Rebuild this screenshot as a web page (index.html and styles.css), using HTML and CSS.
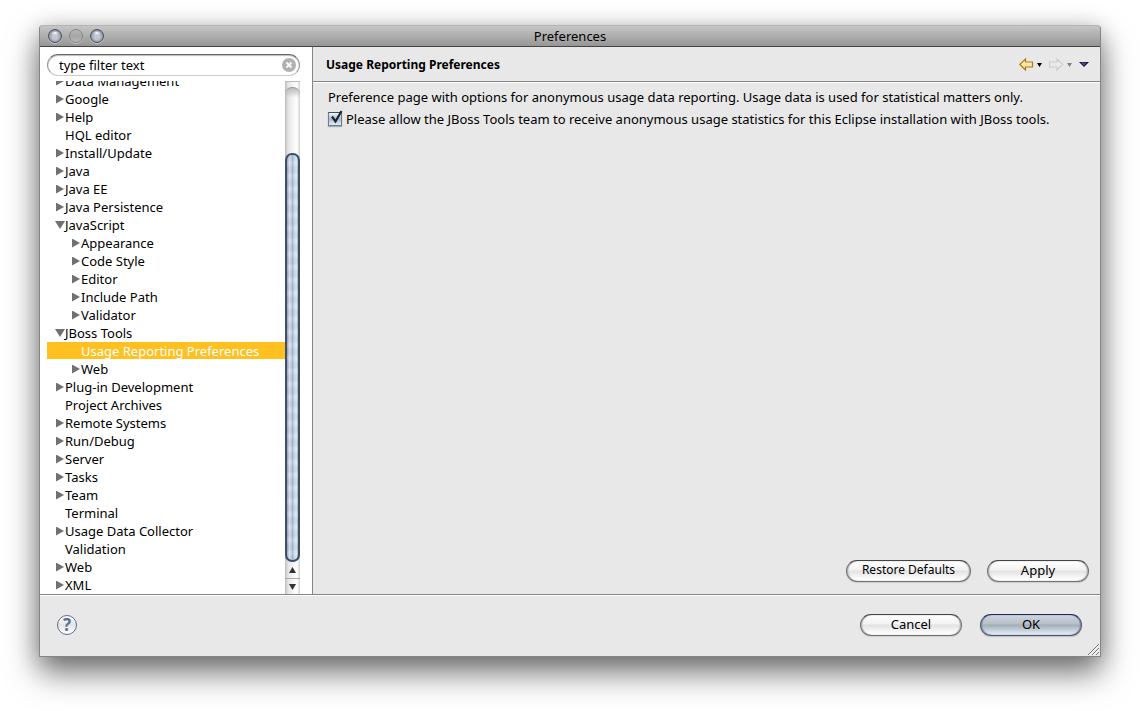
FILE: index.html
```html
<!DOCTYPE html>
<html lang="en">
<head>
<meta charset="utf-8">
<title>Preferences</title>
<link rel="stylesheet" href="styles.css">
</head>
<body>
<main class="window">
  <header class="titlebar">
    <div class="lights">
      <button class="light" type="button" aria-label="Close"></button>
      <button class="light light-off" type="button" aria-label="Minimize" disabled></button>
      <button class="light" type="button" aria-label="Zoom"></button>
    </div>
    <h1 class="window-title">Preferences</h1>
  </header>
  <div class="columns">
    <nav class="sidebar" aria-label="Preference categories">
      <div class="search">
        <input class="search-input" type="text" value="type filter text" aria-label="Filter">
        <button class="clear" type="button" aria-label="Clear filter">
          <svg width="14" height="14" viewBox="0 0 14 14"><circle cx="7" cy="7" r="7" fill="#b0b0b0"/><path d="M4.500 4.500l5 5M9.500 4.500l-5 5" stroke="#fff" stroke-width="1.800"/></svg>
        </button>
      </div>
      <div class="tree-area">
        <div class="tree-view">
          <ul class="tree">
            <li class="row closed">Data Management</li>
            <li class="row closed">Google</li>
            <li class="row closed">Help</li>
            <li class="row">HQL editor</li>
            <li class="row closed">Install/Update</li>
            <li class="row closed">Java</li>
            <li class="row closed">Java EE</li>
            <li class="row closed">Java Persistence</li>
            <li class="row open">JavaScript</li>
            <li class="row child closed">Appearance</li>
            <li class="row child closed">Code Style</li>
            <li class="row child closed">Editor</li>
            <li class="row child closed">Include Path</li>
            <li class="row child closed">Validator</li>
            <li class="row open">JBoss Tools</li>
            <li class="row child selected">Usage Reporting Preferences</li>
            <li class="row child closed">Web</li>
            <li class="row closed">Plug-in Development</li>
            <li class="row">Project Archives</li>
            <li class="row closed">Remote Systems</li>
            <li class="row closed">Run/Debug</li>
            <li class="row closed">Server</li>
            <li class="row closed">Tasks</li>
            <li class="row closed">Team</li>
            <li class="row">Terminal</li>
            <li class="row closed">Usage Data Collector</li>
            <li class="row">Validation</li>
            <li class="row closed">Web</li>
            <li class="row closed">XML</li>
          </ul>
        </div>
        <div class="scrollbar">
          <div class="track"></div>
          <div class="thumb"></div>
          <button class="step" type="button" aria-label="Scroll up"><svg width="7" height="6" viewBox="0 0 7 6"><path d="M3.500 0L7 6H0z" fill="#333"/></svg></button>
          <button class="step step-down" type="button" aria-label="Scroll down"><svg width="7" height="6" viewBox="0 0 7 6"><path d="M0 0h7L3.500 6z" fill="#333"/></svg></button>
        </div>
      </div>
    </nav>
    <section class="page">
      <header class="page-head">
        <h2 class="page-title">Usage Reporting Preferences</h2>
        <div class="history">
          <button class="tool" type="button" aria-label="Back"><svg width="24" height="14" viewBox="0 0 24 14"><defs><linearGradient id="gold" x2="0" y2="1"><stop offset="0" stop-color="#fffbe6"/><stop offset="1" stop-color="#fbd772"/></linearGradient></defs><path d="M.8 6.500L6.500 1v3h7v5h-7v3z" fill="url(#gold)" stroke="#b47a10" stroke-width="1.200"/><path d="M18 5h5l-2.500 4z" fill="#000"/></svg></button>
          <button class="tool" type="button" aria-label="Forward" disabled><svg width="24" height="14" viewBox="0 0 24 14"><path d="M13.700 6.500L8 1v3H.6v5H8v3z" fill="#eaeae7" stroke="#ccc" stroke-width="1.200"/><path d="M18 5h5l-2.500 4z" fill="#808080"/></svg></button>
          <button class="tool" type="button" aria-label="Menu"><svg width="10" height="14" viewBox="0 0 10 14"><path d="M0 4h10L5 9z" fill="#111"/><path d="M1.500 4.500h6L5 8z" fill="#4848a0"/></svg></button>
        </div>
      </header>
      <div class="page-body">
        <p class="description">Preference page with options for anonymous usage data reporting. Usage data is used for statistical matters only.</p>
        <label class="option"><input class="check" type="checkbox" checked><svg class="tick" width="16" height="16" viewBox="0 0 16 16"><path d="M4 6.500L7.500 11.500L13.500 1" fill="none" stroke="#20242c" stroke-width="2.200"/></svg>Please allow the JBoss Tools team to receive anonymous usage statistics for this Eclipse installation with JBoss tools.</label>
      </div>
      <div class="page-actions">
        <button class="push wide" type="button">Restore Defaults</button>
        <button class="push" type="button">Apply</button>
      </div>
    </section>
  </div>
  <footer class="footer">
    <button class="help" type="button" aria-label="Help">?</button>
    <div class="footer-actions">
      <button class="push" type="button">Cancel</button>
      <button class="push default" type="submit">OK</button>
    </div>
    <svg class="grip" width="11" height="11" viewBox="0 0 11 11"><path d="M0 11L11 0M4 11l7-7M8 11l3-3" stroke="#777"/><path d="M1.500 11L11 1.500M5.500 11L11 5.500" stroke="#fff" stroke-width=".7"/></svg>
  </footer>
</main>
</body>
</html>
```
FILE: styles.css
```css
* { box-sizing: border-box; }
body {
  margin: 0;
  height: 100vh;
  padding: 25px 39px 54px;
  background: #fff;
  color: #000;
  font: 13px/18px "Noto Sans", "Lucida Grande", sans-serif;
  overflow: hidden;
}
button, input { font: inherit; color: inherit; margin: 0; }
button { border: 0; background: none; padding: 0; }
.window {
  height: 100%;
  display: flex;
  flex-direction: column;
  background: #e8e8e8;
  border: 1px solid #858585;
  border-top: 0;
  border-radius: 4px 4px 0 0;
  box-shadow: 0 16px 32px rgba(0, 0, 0, .52), 0 3px 22px rgba(0, 0, 0, .2);
}
.titlebar {
  height: 22px;
  flex: none;
  display: grid;
  grid-template-columns: 1fr auto 1fr;
  align-items: center;
  padding: 0 8px;
  border-bottom: 1px solid #444;
  border-radius: 4px 4px 0 0;
  background: linear-gradient(#c8c8c8, #969696);
  box-shadow: inset 0 1px #b4b4b4;
}
.lights { display: flex; gap: 7px; }
.light {
  width: 14px;
  height: 14px;
  border-radius: 50%;
  border: 1px solid #4c5362;
  background:
    radial-gradient(ellipse 4px 2px at 50% 25%, #fff, transparent),
    radial-gradient(circle at 50% 55%, #c2c7d0 30%, #606a7c 100%);
  box-shadow: 0 1px rgba(255, 255, 255, .4);
}
.light-off { border-color: #858585; background: linear-gradient(#b8b8b8, #a6a6a6 50%, #b8b8b8); }
.window-title { margin: 0; font-size: 13px; font-weight: 400; }
.columns { flex: 1; min-height: 0; display: flex; }
.sidebar {
  width: 273px;
  flex: none;
  display: flex;
  flex-direction: column;
  gap: 5px;
  padding: 7px 12px 0 7px;
  background: #fff;
  border-right: 1px solid #858585;
}
.search {
  height: 22px;
  flex: none;
  display: flex;
  align-items: center;
  padding: 0 3px 0 11px;
  border: 1px solid #999;
  border-top-color: #666;
  border-bottom-color: #ccc;
  border-radius: 11px;
  box-shadow: inset 0 1px 1px #bbb;
}
.search-input { flex: 1; min-width: 0; border: 0; padding: 0; background: none; outline: 0; }
.clear { display: flex; }
.tree-area { flex: 1; min-height: 0; display: flex; }
.tree-view { flex: 1; overflow: hidden; display: flex; flex-direction: column; justify-content: flex-end; }
.tree { list-style: none; margin: 0; padding: 0; }
.row { display: flex; align-items: center; height: 18px; padding-left: 18px; white-space: nowrap; }
.child { padding-left: 34px; }
.closed::before, .open::before { content: ""; flex: none; background: #717171; }
.closed::before { width: 8px; height: 9px; margin: 0 1px 0 -9px; clip-path: polygon(0 0, 100% 50%, 0 100%); }
.open::before { width: 10px; height: 8px; margin: 0 0 0 -10px; clip-path: polygon(0 0, 100% 0, 50% 100%); }
.selected { background: linear-gradient(#ffc020, #ffc020) 0 0 / 100% 17px no-repeat; color: #fff; }
.scrollbar {
  width: 15px;
  flex: none;
  display: flex;
  flex-direction: column;
  background: linear-gradient(90deg, #bbb, #e4e4e4 20%, #f6f6f6 55%, #fff 80%, #d0d0d0);
}
.track {
  height: 72px;
  flex: none;
  padding-top: 5px;
  border-top: 1px solid #bbb;
}
.track::before {
  content: "";
  display: block;
  height: 14px;
  border-top: 1px solid #999;
  border-radius: 7px 7px 0 0;
  background: linear-gradient(#bbb, transparent 70%);
}
.thumb {
  flex: 1;
  border: 2px solid #3f4f66;
  border-radius: 7px;
  background:
    repeating-linear-gradient(rgba(90, 125, 170, .1) 0 4px, rgba(255, 255, 255, .08) 7px 9px, rgba(90, 125, 170, .1) 13px),
    linear-gradient(90deg, #8da0b8, #dbe4ef 22%, #c0ccdb 42%, #aabbd0 50%, #cbd9e7 65%, #e4eef7 85%, #9aa9bd);
}
.step { flex: none; height: 16px; display: flex; align-items: center; justify-content: center; }
.step-down { border-top: 1px solid #aaa; }
.page { flex: 1; min-width: 0; display: flex; flex-direction: column; }
.page-head {
  height: 35px;
  display: flex;
  align-items: center;
  justify-content: space-between;
  padding: 2px 11px 0 13px;
  border-bottom: 1px solid #858585;
  box-shadow: 0 1px #fff;
}
.page-title { margin: 0; font-size: 12px; font-weight: 700; }
.history { display: flex; gap: 6px; }
.tool { display: flex; }
.page-body { flex: 1; padding: 6px 15px; white-space: nowrap; }
.description { margin: 0; }
.option { position: relative; display: flex; align-items: center; gap: 4px; margin-top: 4px; }
.check {
  appearance: none;
  width: 14px;
  height: 14px;
  flex: none;
  margin: 0;
  border: 1px solid #6c7c90;
  border-top-color: #3e4d66;
  background: linear-gradient(#f2f6fa, #aabacd 50%, #e0edf8);
  box-shadow: 0 1px 1px #aaa;
}
.tick { position: absolute; left: 0; top: 0; pointer-events: none; }
.check:not(:checked) + .tick { display: none; }
.page-actions { display: flex; justify-content: flex-end; gap: 16px; padding: 0 11px 12px; }
.push {
  width: 102px;
  height: 22px;
  padding-bottom: 2px;
  border: 1px solid #737373;
  border-top-color: #444;
  border-radius: 11px;
  background: linear-gradient(#fff, #f2f2f2 45%, #e2e2e2 50%, #fff 95%);
  box-shadow: inset 1px 0 1px #aaa, inset -1px 0 1px #aaa, 0 1px 1px #ccc;
  line-height: 18px;
}
.wide { width: 125px; font-size: 12px; }
.default {
  border-color: #4f5a70;
  border-top-color: #1e2c5c;
  background: linear-gradient(#d0d5dc, #b7bfc9 45%, #a2adb9 50%, #e0eaf4 95%);
  box-shadow: inset 1px 0 1px #7c8798, inset -1px 0 1px #7c8798, 0 1px 1px #bbb;
}
.footer {
  position: relative;
  height: 62px;
  flex: none;
  display: flex;
  align-items: center;
  justify-content: space-between;
  padding: 0 18px 2px 17px;
  border-top: 1px solid #858585;
  box-shadow: inset 0 1px #fff;
}
.help {
  width: 20px;
  height: 20px;
  border: 1px solid #5a6f90;
  border-radius: 50%;
  background: linear-gradient(#fff, #e4e4e4 50%, #fff);
  color: #5c7095;
  font: 700 17px/18px "Noto Sans", sans-serif;
}
.footer-actions { display: flex; gap: 18px; }
.grip { position: absolute; right: 1px; bottom: 1px; }
```
